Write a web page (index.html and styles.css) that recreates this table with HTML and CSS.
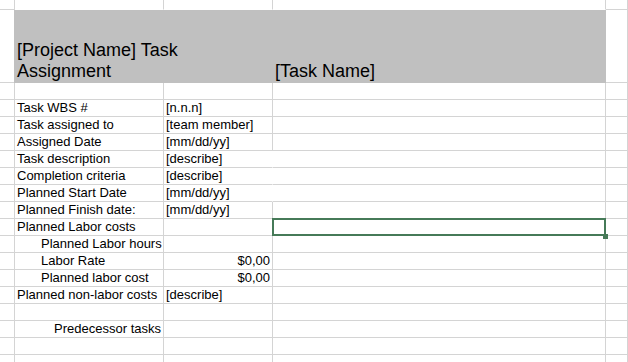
FILE: index.html
```html
<!DOCTYPE html>
<html>
<head>
<meta charset="utf-8">
<link rel="stylesheet" href="styles.css">
</head>
<body>
<div class="sheet">
  <div class="row r-top">
    <div class="c"></div><div class="c top-fill"></div><div class="c top-fill"></div><div class="c top-fill"></div><div class="c"></div>
  </div>
  <div class="row r-head">
    <div class="c"></div>
    <div class="c head span2"><span class="title">[Project Name] Task Assignment</span></div>
    <div class="c head head-d">[Task Name]</div>
    <div class="c"></div>
  </div>
  <div class="row"><div class="c"></div><div class="c"></div><div class="c"></div><div class="c"></div><div class="c"></div></div>
  <div class="row"><div class="c"></div><div class="c">Task WBS #</div><div class="c">[n.n.n]</div><div class="c"></div><div class="c"></div></div>
  <div class="row"><div class="c"></div><div class="c">Task assigned to</div><div class="c">[team member]</div><div class="c"></div><div class="c"></div></div>
  <div class="row"><div class="c"></div><div class="c">Assigned Date</div><div class="c">[mm/dd/yy]</div><div class="c"></div><div class="c"></div></div>
  <div class="row"><div class="c"></div><div class="c">Task description</div><div class="c spill">[describe]</div><div class="c"></div><div class="c"></div></div>
  <div class="row"><div class="c"></div><div class="c">Completion criteria</div><div class="c spill">[describe]</div><div class="c"></div><div class="c"></div></div>
  <div class="row"><div class="c"></div><div class="c">Planned Start Date</div><div class="c spill">[mm/dd/yy]</div><div class="c"></div><div class="c"></div></div>
  <div class="row"><div class="c"></div><div class="c">Planned Finish date:</div><div class="c">[mm/dd/yy]</div><div class="c"></div><div class="c"></div></div>
  <div class="row"><div class="c"></div><div class="c">Planned Labor costs</div><div class="c"></div><div class="c selected"><span class="handle"></span></div><div class="c"></div></div>
  <div class="row"><div class="c"></div><div class="c indent">Planned Labor hours</div><div class="c"></div><div class="c"></div><div class="c"></div></div>
  <div class="row"><div class="c"></div><div class="c indent">Labor Rate</div><div class="c num">$0,00</div><div class="c"></div><div class="c"></div></div>
  <div class="row"><div class="c"></div><div class="c indent">Planned labor cost</div><div class="c num">$0,00</div><div class="c"></div><div class="c"></div></div>
  <div class="row"><div class="c"></div><div class="c">Planned non-labor costs</div><div class="c">[describe]</div><div class="c"></div><div class="c"></div></div>
  <div class="row"><div class="c"></div><div class="c"></div><div class="c"></div><div class="c"></div><div class="c"></div></div>
  <div class="row"><div class="c"></div><div class="c num">Predecessor tasks</div><div class="c"></div><div class="c"></div><div class="c"></div></div>
  <div class="row"><div class="c"></div><div class="c"></div><div class="c"></div><div class="c"></div><div class="c"></div></div>
  <div class="row"><div class="c"></div><div class="c"></div><div class="c"></div><div class="c"></div><div class="c"></div></div>
</div>
</body>
</html>
```

FILE: styles.css
```css
html, body {
  margin: 0;
  padding: 0;
  background: #ffffff;
}

.sheet {
  width: 628px;
  height: 362px;
  overflow: hidden;
  font-family: "Liberation Sans", Arial, sans-serif;
  font-size: 13px;
  color: #000000;
}

.row {
  display: grid;
  grid-template-columns: 15px 149px 109px 333px 1fr;
  height: 17px;
}

.r-top {
  height: 10px;
}

.r-head {
  height: 73px;
}

.c {
  box-sizing: border-box;
  border-right: 1px solid #d4d4d4;
  border-bottom: 1px solid #d4d4d4;
  display: flex;
  align-items: flex-end;
  padding: 0 2px;
  line-height: 16px;
  white-space: nowrap;
  position: relative;
  min-width: 0;
}

.top-fill {
  border-bottom-color: #ffffff;
}

.head {
  background: #c0c0c0;
  border-color: #c0c0c0;
  font-size: 18px;
  line-height: 21px;
}

.span2 {
  grid-column: span 2;
  margin-left: -1px;
  white-space: normal;
  padding-left: 3px;
}

.title {
  display: block;
}

.spill {
  border-right-color: transparent;
}

.indent {
  padding-left: 26px;
}

.num {
  justify-content: flex-end;
}

.selected::after {
  content: "";
  position: absolute;
  top: -1px;
  left: -1px;
  right: -1px;
  bottom: -1px;
  border: 2px solid #467a58;
  box-sizing: border-box;
}

.handle {
  position: absolute;
  left: 330px;
  top: 15px;
  width: 5px;
  height: 5px;
  background: #467a58;
  z-index: 2;
}
```
